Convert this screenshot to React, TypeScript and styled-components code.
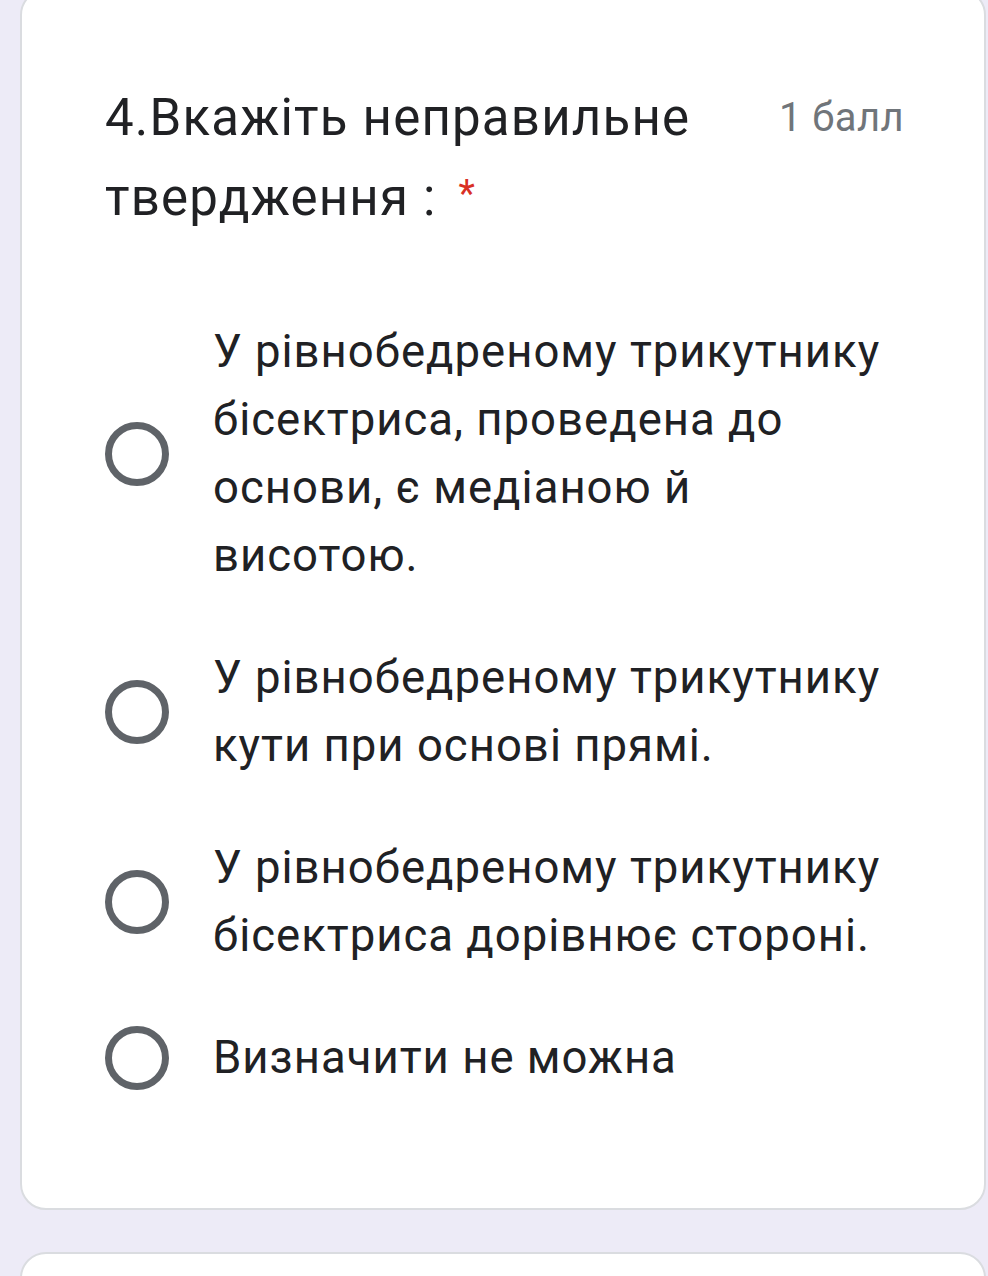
import React from 'react'
import styled, { createGlobalStyle } from 'styled-components'

const GlobalStyle = createGlobalStyle`
  html, body {
    margin: 0;
    padding: 0;
    background: #edebf7;
  }
  body {
    font-family: Roboto, 'Noto Sans', 'Liberation Sans', sans-serif;
    color: #202124;
  }
`

const Page = styled.div`
  padding: 0 0 0 20px;
  margin-top: -11px;
  display: flex;
  flex-direction: column;
  gap: 42px;
  height: 1287px;
  overflow: hidden;
`

const Card = styled.div<{ $empty?: boolean }>`
  background: #fff;
  border: 2px solid #dadce0;
  border-radius: 26px;
  width: 966px;
  box-sizing: border-box;
  padding: ${(p) => (p.$empty ? '0' : '87px 80px 116px 83px')};
  min-height: ${(p) => (p.$empty ? '200px' : 'auto')};
  flex-shrink: 0;
`

const Header = styled.div`
  display: flex;
  align-items: flex-start;
  justify-content: space-between;
  gap: 60px;
`

const Title = styled.div`
  font-size: 51px;
  line-height: 80px;
  color: #202124;
  flex: 1;
  letter-spacing: 1.2px;
`

const Required = styled.span`
  color: #d93025;
  font-size: 38px;
  line-height: 1;
  margin-left: 22px;
  vertical-align: 8px;
`

const Points = styled.div`
  font-size: 40px;
  line-height: 80px;
  color: #70757a;
  white-space: nowrap;
  letter-spacing: 0.4px;
`

const Options = styled.div`
  margin-top: 80px;
  display: flex;
  flex-direction: column;
  gap: 54px;
`

const Option = styled.label`
  display: flex;
  align-items: center;
  gap: 44px;
  padding-right: 16px;
  cursor: pointer;
`

const Radio = styled.span`
  width: 64px;
  height: 64px;
  box-sizing: border-box;
  border: 7px solid #5f6368;
  border-radius: 50%;
  flex-shrink: 0;
`

const Label = styled.span`
  font-size: 45.5px;
  line-height: 68px;
  color: #202124;
  letter-spacing: 1px;
`

const options = [
  'У рівнобедреному трикутнику бісектриса, проведена до основи, є медіаною й висотою.',
  'У рівнобедреному трикутнику кути при основі прямі.',
  'У рівнобедреному трикутнику бісектриса дорівнює стороні.',
  'Визначити не можна',
]

const App = () => {
  return (
    <>
      <GlobalStyle />
      <Page>
        <Card>
          <Header>
            <Title>
              4.Вкажіть неправильне твердження :<Required>*</Required>
            </Title>
            <Points>1 балл</Points>
          </Header>
          <Options>
            {options.map((text) => (
              <Option key={text}>
                <Radio />
                <Label>{text}</Label>
              </Option>
            ))}
          </Options>
        </Card>
        <Card $empty />
      </Page>
    </>
  )
}

export default App
